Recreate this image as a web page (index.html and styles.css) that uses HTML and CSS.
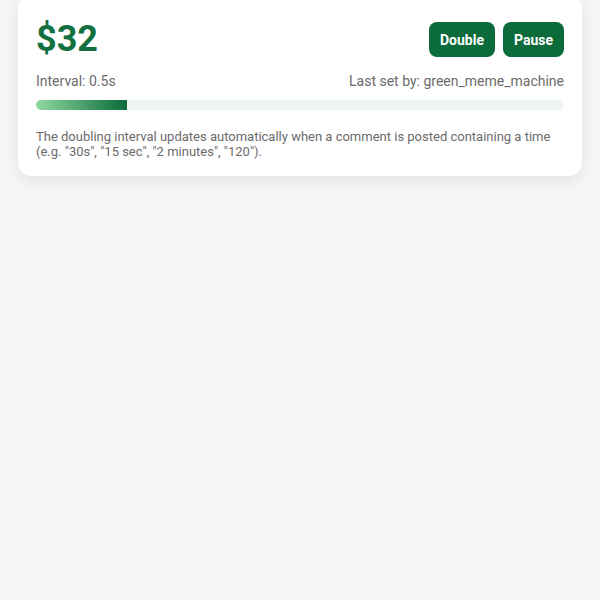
FILE: index.html
```html
<!DOCTYPE html>
<html lang="en">
<head>
  <meta charset="UTF-8">
  <meta name="viewport" content="width=device-width, initial-scale=1.0">
  <title>Doubling Counter</title>
  <link rel="stylesheet" href="styles.css">
</head>
<body>

<div class="card">
  <div class="top">
    <div class="amount">$32</div>
    <div class="actions">
      <button class="btn">Double</button>
      <button class="btn">Pause</button>
    </div>
  </div>

  <div class="meta">
    <span>Interval: 0.5s</span>
    <span>Last set by: green_meme_machine</span>
  </div>

  <div class="track">
    <div class="fill" style="width: 17.2%;"></div>
  </div>

  <p class="note">The doubling interval updates automatically when a comment is posted containing a time (e.g. "30s", "15 sec", "2 minutes", "120").</p>
</div>

</body>
</html>
```

FILE: styles.css
```css
* {
  margin: 0;
  padding: 0;
  box-sizing: border-box;
}
body {
  font-family: Roboto, "Liberation Sans", sans-serif;
  background-color: #f5f5f5;
  height: 100vh;
}
.card {
  margin: -6px 18px 0;
  padding: 28px 18px 17px;
  background-color: #fff;
  border-radius: 14px;
  box-shadow: 0 4px 14px rgba(0, 0, 0, 0.08);
}
.top {
  display: flex;
  align-items: center;
  justify-content: space-between;
}
.amount {
  font-size: 36px;
  font-weight: 700;
  color: #137040;
  line-height: 35px;
}
.actions {
  display: flex;
  gap: 8px;
}
.btn {
  background-color: #0b6b3a;
  color: #fff;
  border: none;
  border-radius: 8px;
  height: 35px;
  padding: 0 11px;
  font-family: inherit;
  font-size: 14px;
  font-weight: 700;
  cursor: pointer;
}
.meta {
  display: flex;
  justify-content: space-between;
  margin-top: 16px;
  font-size: 14px;
  color: #6b6b6b;
}
.track {
  margin-top: 11px;
  height: 10px;
  background-color: #edf3ee;
  border-radius: 5px;
  overflow: hidden;
}
.fill {
  height: 100%;
  background: linear-gradient(90deg, #8fd9a0, #0b6b3a);
}
.note {
  margin-top: 19px;
  font-size: 13px;
  line-height: 15px;
  color: #6b6b6b;
}
```
